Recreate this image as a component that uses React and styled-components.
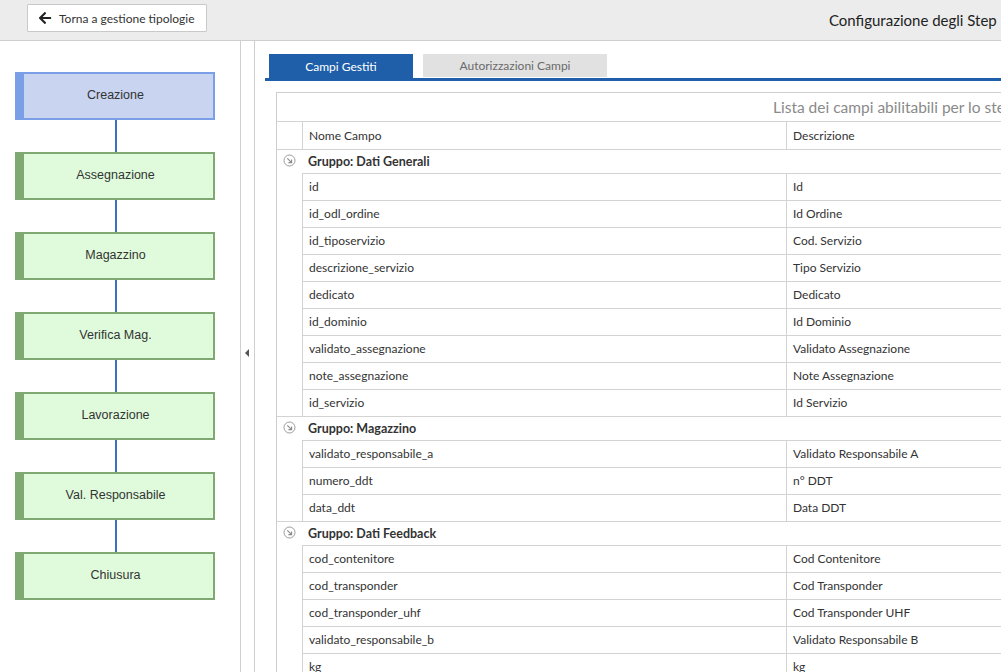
import React from 'react'
import styled, { createGlobalStyle } from 'styled-components'
import { FaArrowLeft } from 'react-icons/fa'

//----------------CSS------------------------>>>//
const Global = createGlobalStyle`
    html, body { margin: 0; padding: 0; }
    body {
        font-family: Lato, "Open Sans", sans-serif;
        color: #333;
        background: #fff;
        overflow: hidden;
    }
    * { box-sizing: border-box; }
`
const Page = styled.div`
    width: 1001px;
    height: 672px;
    overflow: hidden;
    display: flex;
    flex-direction: column;
`
const TopBar = styled.div`
    height: 41px;
    flex: none;
    background: #ececec;
    border-bottom: 1px solid #cfcfcf;
    display: flex;
    align-items: flex-start;
    padding: 4px 0 0 27px;
`
const BackButton = styled.button`
    flex: none;
    height: 28px;
    width: 180px;
    display: flex;
    align-items: center;
    gap: 7px;
    padding: 0 0 0 10px;
    background: #fff;
    border: 1px solid #c9c9c9;
    border-radius: 1px;
    font-family: Lato, sans-serif;
    font-size: 12px;
    color: #333;
    white-space: nowrap;
`
const Title = styled.div`
    flex: none;
    margin: 7px 0 0 622px;
    font-size: 15px;
    white-space: nowrap;
    color: #222;
`
const Main = styled.div`
    flex: 1;
    display: flex;
    min-height: 0;
`
const Side = styled.div`
    width: 241px;
    flex: none;
    border-right: 1px solid #cfcfcf;
    padding: 31px 0 0 15px;
    display: flex;
    flex-direction: column;
    align-items: flex-start;
`
const Step = styled.div`
    width: 200px;
    height: 48px;
    display: flex;
    align-items: center;
    justify-content: center;
    padding: 0 6px 3px 0;
    font-family: "Liberation Sans", Arial, sans-serif;
    font-size: 12.5px;
    color: #333;
    background: ${p => p.active ? '#c9d4f0' : '#e0fbdc'};
    border: 2px solid ${p => p.active ? '#7a9fe6' : '#7fa872'};
    border-left-width: 9px;
`
const Link = styled.div`
    width: 2px;
    height: 32px;
    margin-left: 100px;
    background: #3b72b9;
`
const Splitter = styled.div`
    width: 14px;
    flex: none;
    border-right: 1px solid #cfcfcf;
    display: flex;
    align-items: center;
    justify-content: center;
    padding-bottom: 8px;
`
const Caret = styled.div`
    width: 0;
    height: 0;
    border-top: 4px solid transparent;
    border-bottom: 4px solid transparent;
    border-right: 4px solid #555;
    margin-right: 2px;
`
const Content = styled.div`
    flex: 1;
    padding: 13px 0 0 10px;
    min-width: 0;
`
const Tabs = styled.div`
    display: flex;
    align-items: flex-start;
    gap: 10px;
    padding-left: 4px;
    border-bottom: 3px solid #1f5fa9;
    height: 27px;
`
const Tab = styled.div`
    height: ${p => p.active ? 24 : 23}px;
    width: ${p => p.w}px;
    display: flex;
    align-items: center;
    justify-content: center;
    font-size: 12px;
    background: ${p => p.active ? '#1f5fa9' : '#e1e1e1'};
    color: ${p => p.active ? '#fff' : '#6a6a6a'};
`
const Table = styled.div`
    margin: 11px 0 0 11px;
    width: 900px;
    border-top: 1px solid #cfcfcf;
    border-left: 1px solid #cfcfcf;
    font-size: 12px;
`
const Caption = styled.div`
    height: 28px;
    display: flex;
    align-items: center;
    padding-left: 496px;
    font-size: 15.5px;
    color: #8a8a8a;
    white-space: nowrap;
`
const Row = styled.div`
    display: grid;
    grid-template-columns: 25px 484px 1fr;
    height: ${p => p.h}px;
    border-top: ${p => p.line ? '1px solid #d3d3d3' : 'none'};
`
const Cell = styled.div`
    border-left: 1px solid #d3d3d3;
    border-top: ${p => p.top ? '1px solid #d3d3d3' : 'none'};
    display: flex;
    align-items: center;
    padding: 0 0 1px 6px;
    white-space: nowrap;
    color: #333;
`
const GroupLabel = styled.div`
    grid-column: 2 / span 2;
    display: flex;
    align-items: center;
    padding-left: 6px;
    font-size: 12.5px;
    font-weight: bold;
    color: #333;
`
const IconCell = styled.div`
    display: flex;
    justify-content: center;
    padding-top: 4px;
`

const Expand = () => (
    <svg width="13" height="13" viewBox="0 0 13 13">
        <circle cx="6.5" cy="6.5" r="5.5" fill="none" stroke="#9a9a9a" strokeWidth="1" />
        <path d="M4.3 4.3 L8.4 8.4 M8.6 5.4 L8.6 8.6 L5.4 8.6" fill="none" stroke="#8a8a8a" strokeWidth="1.1" />
    </svg>
)

const steps = ['Creazione', 'Assegnazione', 'Magazzino', 'Verifica Mag.', 'Lavorazione', 'Val. Responsabile', 'Chiusura']

const groups = [
    { name: 'Gruppo: Dati Generali', rows: [
        ['id', 'Id'],
        ['id_odl_ordine', 'Id Ordine'],
        ['id_tiposervizio', 'Cod. Servizio'],
        ['descrizione_servizio', 'Tipo Servizio'],
        ['dedicato', 'Dedicato'],
        ['id_dominio', 'Id Dominio'],
        ['validato_assegnazione', 'Validato Assegnazione'],
        ['note_assegnazione', 'Note Assegnazione'],
        ['id_servizio', 'Id Servizio'],
    ]},
    { name: 'Gruppo: Magazzino', rows: [
        ['validato_responsabile_a', 'Validato Responsabile A'],
        ['numero_ddt', 'n° DDT'],
        ['data_ddt', 'Data DDT'],
    ]},
    { name: 'Gruppo: Dati Feedback', rows: [
        ['cod_contenitore', 'Cod Contenitore'],
        ['cod_transponder', 'Cod Transponder'],
        ['cod_transponder_uhf', 'Cod Transponder UHF'],
        ['validato_responsabile_b', 'Validato Responsabile B'],
        ['kg', 'kg'],
    ]},
]

export default function App() {
    return (
        <Page>
            <Global />
            <TopBar>
                <BackButton><FaArrowLeft size={14} color="#222" />Torna a gestione tipologie</BackButton>
                <Title>Configurazione degli Step</Title>
            </TopBar>
            <Main>
                <Side>
                    {steps.map((s, i) => (
                        <React.Fragment key={s}>
                            {i > 0 && <Link />}
                            <Step active={i === 0}>{s}</Step>
                        </React.Fragment>
                    ))}
                </Side>
                <Splitter><Caret /></Splitter>
                <Content>
                    <Tabs>
                        <Tab active w={144}>Campi Gestiti</Tab>
                        <Tab w={184}>Autorizzazioni Campi</Tab>
                    </Tabs>
                    <Table>
                        <Caption>Lista dei campi abilitabili per lo step</Caption>
                        <Row h={28} line>
                            <div />
                            <Cell>Nome Campo</Cell>
                            <Cell>Descrizione</Cell>
                        </Row>
                        {groups.map(g => (
                            <React.Fragment key={g.name}>
                                <Row h={24} line>
                                    <IconCell><Expand /></IconCell>
                                    <GroupLabel>{g.name}</GroupLabel>
                                </Row>
                                {g.rows.map(r => (
                                    <Row h={27} key={r[0]}>
                                        <div />
                                        <Cell top>{r[0]}</Cell>
                                        <Cell top>{r[1]}</Cell>
                                    </Row>
                                ))}
                            </React.Fragment>
                        ))}
                    </Table>
                </Content>
            </Main>
        </Page>
    )
}
